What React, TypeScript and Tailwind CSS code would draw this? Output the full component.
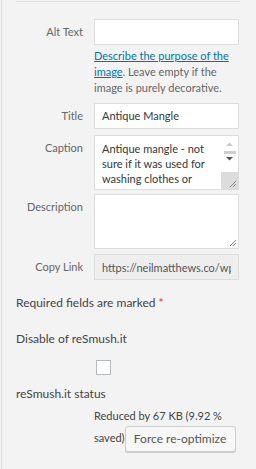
export default function App() {
  const labelCls = 'w-[67px] shrink-0 text-right text-[11px] leading-[16px] text-[#666]';
  const inputCls = 'w-[145px] h-[26px] border border-[#ddd] bg-white px-[7px] text-[11px] leading-[24px] text-[#32373c]';

  return (
    <div className="h-[469px] w-[256px] overflow-hidden bg-[#f3f3f3] pl-[1px] font-['Lato',sans-serif]">
      <div className="h-full border-l border-[#ddd] pl-[14px] pr-[16px] pt-[1px]">
        <div className="border-t border-[#ddd]" />

        {/* Alt text */}
        <div className="mt-[17px] flex gap-[11px]">
          <label className={`${labelCls} pt-[5px]`}>Alt Text</label>
          <div>
            <div className={inputCls} />
            <p className="mt-[3px] w-[145px] text-[11px] leading-[16px] text-[#666]">
              <a className="text-[#0073aa] underline">Describe the purpose of the image</a>. Leave empty if the image is purely decorative.
            </p>
          </div>
        </div>

        {/* Title */}
        <div className="mt-[7px] flex gap-[11px]">
          <label className={`${labelCls} pt-[5px]`}>Title</label>
          <div className={inputCls}>Antique Mangle</div>
        </div>

        {/* Caption */}
        <div className="mt-[6px] flex gap-[11px]">
          <label className={`${labelCls} pt-[5px]`}>Caption</label>
          <div className="flex h-[55px] w-[145px] overflow-hidden border border-[#ddd] bg-white">
            <div className="flex-1 pl-[7px] pt-[5px] text-[11px] leading-[15px] text-[#32373c]">
              Antique mangle - not sure if it was used for washing clothes or
            </div>
            <div className="flex w-[17px] flex-col items-center">
              <svg width="17" height="14" viewBox="0 0 17 14" className="mt-[1px]">
                <path d="M5 9 L8.5 5.5 L12 9 Z" fill="#c8c8c8" />
              </svg>
              <div className="h-[3px] w-[12px] bg-[#cdcdcd]" />
              <svg width="17" height="10" viewBox="0 0 17 10">
                <path d="M5 3 L8.5 6.5 L12 3 Z" fill="#555" />
              </svg>
              <div className="mt-auto h-[17px] w-[17px] bg-[#dcdcdc]">
                <svg width="17" height="17" viewBox="0 0 17 17">
                  <path d="M15 9 L9 15 M15 12 L12 15" stroke="#888" strokeWidth="1" />
                </svg>
              </div>
            </div>
          </div>
        </div>

        {/* Description */}
        <div className="mt-[4px] flex gap-[11px]">
          <label className={`${labelCls} pt-[5px]`}>Description</label>
          <div className="relative h-[55px] w-[145px] border border-[#ddd] bg-white">
            <svg width="10" height="10" viewBox="0 0 10 10" className="absolute bottom-[1px] right-[1px]">
              <path d="M9 3 L3 9 M9 6 L6 9" stroke="#888" strokeWidth="1" />
            </svg>
          </div>
        </div>

        {/* Copy link */}
        <div className="mt-[5px] flex gap-[11px]">
          <label className={`${labelCls} pt-[5px]`}>Copy Link</label>
          <input
            readOnly
            value="https://neilmatthews.co/wp-content/uploads/antique-mangle.jpg"
            className="h-[26px] w-[145px] shrink-0 border border-[#ddd] bg-[#eee] px-[7px] text-[11px] text-[#555] outline-none"
          />
        </div>

        <p className="mt-[14px] text-[12px] leading-[18px] text-[#444]">
          Required fields are marked <span className="text-[#dc3232]">*</span>
        </p>

        <p className="mt-[18px] text-[12px] leading-[18px] text-[#444]">Disable of reSmush.it</p>
        <div className="ml-[80px] mt-[12px] h-[15px] w-[15px] border border-[#b4b9be] bg-white" />

        <p className="mt-[10px] text-[12px] leading-[18px] text-[#444]">reSmush.it status</p>
        <p className="ml-[78px] mt-[3px] w-[145px] text-[11px] leading-[20px] text-[#444]">
          Reduced by 67 KB (9.92 % saved)
          <button className="inline-block h-[26px] w-[111px] rounded-[3px] border border-[#ccc] bg-[#f7f7f7] align-middle text-[12px] leading-[24px] text-[#555] shadow-[0_1px_0_#ccc]">
            Force re-optimize
          </button>
        </p>
      </div>
    </div>
  );
}
